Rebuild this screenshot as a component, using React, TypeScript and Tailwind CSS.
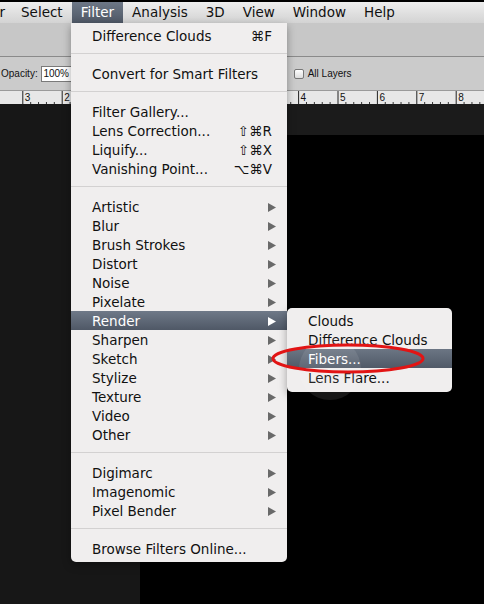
import React from "react";

type Row =
  | { sep: true }
  | { label: string; shortcut?: string; arrow?: boolean; active?: boolean };

const FILTERS: Row[] = [
  { label: "Difference Clouds", shortcut: "⌘F" },
  { sep: true },
  { label: "Convert for Smart Filters" },
  { sep: true },
  { label: "Filter Gallery..." },
  { label: "Lens Correction...", shortcut: "⇧⌘R" },
  { label: "Liquify...", shortcut: "⇧⌘X" },
  { label: "Vanishing Point...", shortcut: "⌥⌘V" },
  { sep: true },
  { label: "Artistic", arrow: true },
  { label: "Blur", arrow: true },
  { label: "Brush Strokes", arrow: true },
  { label: "Distort", arrow: true },
  { label: "Noise", arrow: true },
  { label: "Pixelate", arrow: true },
  { label: "Render", arrow: true, active: true },
  { label: "Sharpen", arrow: true },
  { label: "Sketch", arrow: true },
  { label: "Stylize", arrow: true },
  { label: "Texture", arrow: true },
  { label: "Video", arrow: true },
  { label: "Other", arrow: true },
  { sep: true },
  { label: "Digimarc", arrow: true },
  { label: "Imagenomic", arrow: true },
  { label: "Pixel Bender", arrow: true },
  { sep: true },
  { label: "Browse Filters Online..." },
];

const RENDER = ["Clouds", "Difference Clouds", "Fibers...", "Lens Flare..."];

const MENUBAR = ["Select", "Filter", "Analysis", "3D", "View", "Window", "Help"];

const Arrow = ({ white }: { white?: boolean }) => (
  <svg width="8" height="9" viewBox="0 0 8 9">
    <polygon points="0,0 8,4.5 0,9" fill={white ? "#ffffff" : "#696969"} />
  </svg>
);

const Ruler = () => {
  const ticks = [];
  for (let k = -3; k <= 8; k++) {
    const x = 141 + k * 39.4;
    ticks.push(
      <g key={k}>
        <line x1={x} y1={0} x2={x} y2={14} stroke="#222" strokeWidth="1" />
        <text x={x + 2} y={10} fontSize="10" fontFamily="Liberation Sans, sans-serif" fill="#111">
          {Math.abs(k)}
        </text>
        {[1, 2, 3, 4].map((m) => (
          <line
            key={m}
            x1={x + m * 7.88}
            y1={11}
            x2={x + m * 7.88}
            y2={14}
            stroke="#333"
            strokeWidth="1"
          />
        ))}
      </g>
    );
  }
  return (
    <svg width="484" height="14" className="block">
      {ticks}
    </svg>
  );
};

export default function App() {
  return (
    <div className="relative w-[484px] h-[604px] overflow-hidden bg-black font-['DejaVu_Sans',sans-serif] text-[#111]">
      {/* menu bar */}
      <div className="flex h-[23px] border-t-2 border-black bg-gradient-to-b from-[#eeeeee] to-[#d3d3d3] text-[13.5px] leading-[21px]">
        <div className="flex w-[12px] shrink-0 justify-end overflow-hidden pr-[7px]">
          <span className="shrink-0">Layer</span>
        </div>
        {MENUBAR.map((m) => (
          <div
            key={m}
            className={
              m === "Filter"
                ? "px-[9px] bg-gradient-to-b from-[#6d7786] to-[#4f5866] text-white"
                : "px-[9px]"
            }
          >
            {m}
          </div>
        ))}
      </div>

      {/* tool bar */}
      <div className="h-[34px] border-b border-[#8a8a8a] bg-[#c7c7c7]" />

      {/* options bar */}
      <div className="flex h-[33px] items-center bg-[#cbcbcb] font-['Liberation_Sans',sans-serif] text-[10px]">
        <span className="pl-[1px]">Opacity:</span>
        <div className="ml-[3px] flex h-[16px] w-[31px] items-center justify-center border border-[#7a7a7a] bg-white">
          100%
        </div>
        <div className="ml-[222px] h-[10px] w-[10px] rounded-[2px] border border-[#777] bg-gradient-to-b from-white to-[#dcdcdc]" />
        <span className="ml-[4px]">All Layers</span>
      </div>

      {/* ruler */}
      <div className="h-[14px] border-t border-[#9a9a9a] bg-[#e7e7e7]">
        <Ruler />
      </div>

      {/* canvas */}
      <div className="flex h-[500px]">
        <div className="w-[140px] bg-[#171717]" />
        <div className="flex flex-1 flex-col">
          <div className="h-[31px] bg-[#1b1b1b]" />
          <div className="flex-1 bg-black" />
        </div>
      </div>

      {/* filter menu */}
      <div className="absolute left-[71px] top-[23px] w-[216px] rounded-b-[5px] bg-[#f0eeee] pt-[3px] pb-[4px] text-[13.5px] shadow-[0_3px_8px_rgba(0,0,0,0.35)]">
        {FILTERS.map((r, i) =>
          "sep" in r ? (
            <div key={i} className="h-[19px] pt-[8px]">
              <div className="h-px bg-[#d3d1d1]" />
            </div>
          ) : (
            <div
              key={i}
              className={
                r.active
                  ? "flex h-[19px] items-center justify-between bg-gradient-to-b from-[#6f7988] to-[#4f5866] pl-[21px] pr-[11px] pt-px text-white"
                  : r.shortcut
                  ? "flex h-[19px] items-center justify-between pl-[21px] pr-[15px] pt-px"
                  : "flex h-[19px] items-center justify-between pl-[21px] pr-[11px] pt-px"
              }
            >
              <span>{r.label}</span>
              {r.shortcut && <span>{r.shortcut}</span>}
              {r.arrow && <Arrow white={r.active} />}
            </div>
          )
        )}
      </div>

      {/* render submenu */}
      <div className="absolute left-[287px] top-[308px] w-[165px] rounded-[5px] bg-[#f0eeee] pt-[3px] pb-[5px] text-[13.5px] shadow-[0_3px_8px_rgba(0,0,0,0.35)]">
        {RENDER.map((r) => (
          <div
            key={r}
            className={
              r === "Fibers..."
                ? "flex h-[19px] items-center bg-gradient-to-b from-[#6c7684] to-[#505967] pl-[21px] pt-px text-white"
                : "flex h-[19px] items-center pl-[21px] pt-px"
            }
          >
            {r}
          </div>
        ))}
      </div>

      {/* cursor halo */}
      <div className="absolute left-[299px] top-[338px] h-[62px] w-[62px] rounded-full bg-white/[0.09]" />

      {/* red ellipse */}
      <svg className="absolute left-[270px] top-[342px]" width="156" height="34" viewBox="0 0 156 34">
        <ellipse cx="78" cy="16.5" rx="75" ry="13.5" fill="none" stroke="#e21414" strokeWidth="3" />
      </svg>
    </div>
  );
}
